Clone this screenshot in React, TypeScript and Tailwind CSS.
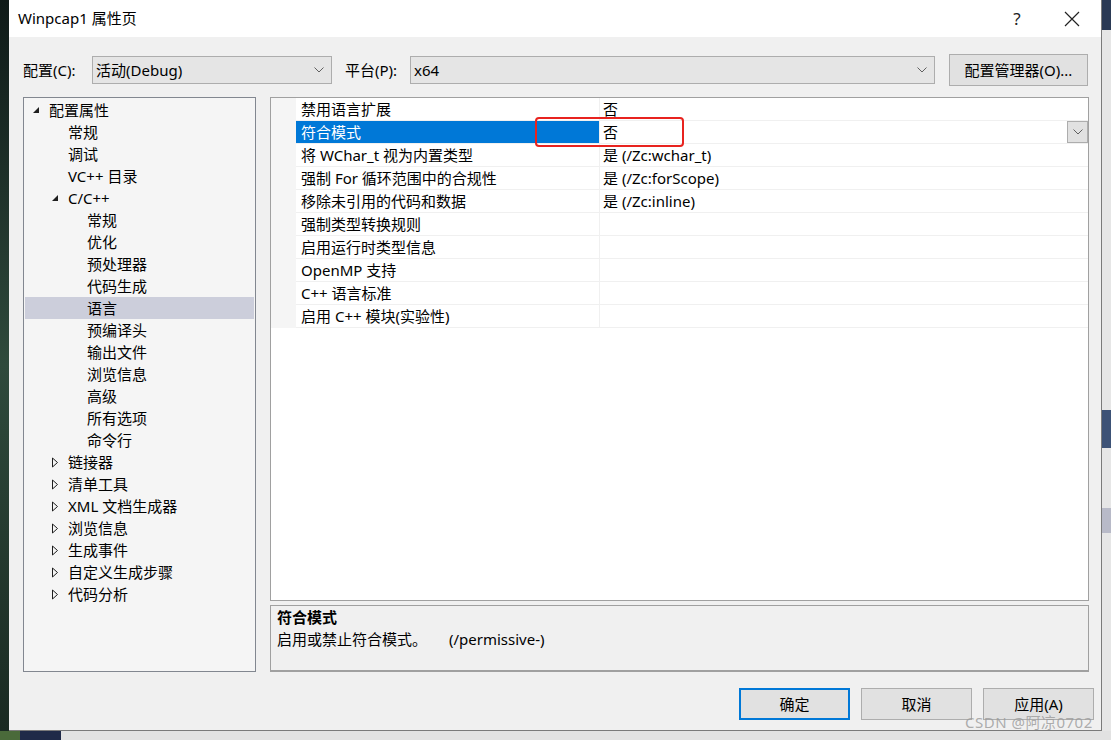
import { useState } from 'react';

interface TreeItem {
  label: string;
  level: number;
  toggle?: 'open' | 'closed';
}

interface PropRow {
  name: string;
  value: string;
}

const treeItems: TreeItem[] = [
  { label: '配置属性', level: 0, toggle: 'open' },
  { label: '常规', level: 1 },
  { label: '调试', level: 1 },
  { label: 'VC++ 目录', level: 1 },
  { label: 'C/C++', level: 1, toggle: 'open' },
  { label: '常规', level: 2 },
  { label: '优化', level: 2 },
  { label: '预处理器', level: 2 },
  { label: '代码生成', level: 2 },
  { label: '语言', level: 2 },
  { label: '预编译头', level: 2 },
  { label: '输出文件', level: 2 },
  { label: '浏览信息', level: 2 },
  { label: '高级', level: 2 },
  { label: '所有选项', level: 2 },
  { label: '命令行', level: 2 },
  { label: '链接器', level: 1, toggle: 'closed' },
  { label: '清单工具', level: 1, toggle: 'closed' },
  { label: 'XML 文档生成器', level: 1, toggle: 'closed' },
  { label: '浏览信息', level: 1, toggle: 'closed' },
  { label: '生成事件', level: 1, toggle: 'closed' },
  { label: '自定义生成步骤', level: 1, toggle: 'closed' },
  { label: '代码分析', level: 1, toggle: 'closed' },
];

const rows: PropRow[] = [
  { name: '禁用语言扩展', value: '否' },
  { name: '符合模式', value: '否' },
  { name: '将 WChar_t 视为内置类型', value: '是 (/Zc:wchar_t)' },
  { name: '强制 For 循环范围中的合规性', value: '是 (/Zc:forScope)' },
  { name: '移除未引用的代码和数据', value: '是 (/Zc:inline)' },
  { name: '强制类型转换规则', value: '' },
  { name: '启用运行时类型信息', value: '' },
  { name: 'OpenMP 支持', value: '' },
  { name: 'C++ 语言标准', value: '' },
  { name: '启用 C++ 模块(实验性)', value: '' },
];

const font = { fontFamily: '"Noto Sans", "Noto Sans CJK SC", sans-serif' };

function Chevron() {
  return (
    <svg width="10" height="6" viewBox="0 0 10 6" fill="none" stroke="#606060" strokeWidth="1">
      <path d="M0.5 0.5 L5 5 L9.5 0.5" />
    </svg>
  );
}

function Toggle({ kind }: { kind: 'open' | 'closed' }) {
  if (kind === 'open') {
    return (
      <svg width="8" height="8" viewBox="0 0 8 8">
        <path d="M7 1 L7 7 L1 7 Z" fill="#1e1e1e" />
      </svg>
    );
  }
  return (
    <svg width="8" height="11" viewBox="0 0 8 11">
      <path d="M1.5 1 L6.5 5.5 L1.5 10 Z" fill="none" stroke="#1e1e1e" strokeWidth="1" />
    </svg>
  );
}

function Select({ value, width }: { value: string; width: string }) {
  return (
    <div className={`${width} h-[28px] flex items-center justify-between bg-[#e5e5e5] border border-[#adadad] pl-[3px] pr-[7px]`}>
      <span>{value}</span>
      <Chevron />
    </div>
  );
}

export default function App() {
  const [selected] = useState(9);
  const [current] = useState(1);

  return (
    <div className="relative w-[1111px] h-[740px] overflow-hidden bg-[#e2e2e2] text-[15px] text-black" style={font}>
      <div className="flex h-[731px]">
        <div className="w-[9px] h-full bg-gradient-to-b from-[#0f1a18] via-[#2f4a3c] to-[#1a2a22]" />

        {/* dialog */}
        <div className="w-[1093px] h-full flex flex-col bg-[#f0f0f0] border-r border-b border-[#7a7a7a]">
          {/* title bar */}
          <div className="h-[37px] bg-white flex items-center justify-between shrink-0">
            <span className="pl-[9px] text-[15px]">Winpcap1 属性页</span>
            <div className="flex items-center">
              <span className="w-[46px] text-center text-[17px] text-[#222] mr-[24px]">?</span>
              <svg width="16" height="16" viewBox="0 0 16 16" className="mr-[21px]" stroke="#222" strokeWidth="1.2">
                <path d="M1 1 L15 15 M15 1 L1 15" />
              </svg>
            </div>
          </div>

          {/* config row */}
          <div className="flex items-center pl-[14px] pt-[16px] h-[50px] shrink-0">
            <span className="w-[69px]">配置(C):</span>
            <Select value="活动(Debug)" width="w-[240px]" />
            <span className="ml-[13px] w-[65px]">平台(P):</span>
            <Select value="x64" width="w-[525px]" />
            <div className="ml-[14px] w-[139px] h-[32px] flex items-center justify-center bg-[#e1e1e1] border border-[#adadad]">
              配置管理器(O)...
            </div>
          </div>

          {/* main */}
          <div className="flex pl-[14px] pt-[10px] gap-[14px]">
            {/* tree */}
            <div className="w-[233px] h-[575px] bg-[#f5f5f5] border border-[#828790] pt-[1px] px-[1px]">
              {treeItems.map((item, i) => (
                <div
                  key={i}
                  className={`h-[22px] flex items-center ${i === selected ? 'bg-[#cccedb]' : ''}`}
                >
                  <div
                    className={`flex items-center justify-end shrink-0 pr-[9px] ${
                      item.level === 0 ? 'w-[24px]' : item.level === 1 ? 'w-[43px]' : 'w-[62px]'
                    }`}
                  >
                    {item.toggle && <Toggle kind={item.toggle} />}
                  </div>
                  <span>{item.label}</span>
                </div>
              ))}
            </div>

            {/* right side */}
            <div className="w-[819px] flex flex-col gap-[4px]">
              <div className="relative h-[504px] bg-white border border-[#a0a0a0]">
                <div className="flex">
                  <div className="w-[25px] h-[230px] bg-[#f5f5f5] shrink-0" />
                  <div className="flex-1">
                    {rows.map((r, i) => (
                      <div key={i} className="h-[23px] flex border-b border-[#f0f0f0]">
                        <div
                          className={`w-[304px] shrink-0 pl-[5px] flex items-center border-r border-[#f0f0f0] ${
                            i === current ? 'bg-[#0078d7] text-white' : ''
                          }`}
                        >
                          {r.name}
                        </div>
                        <div className="flex-1 flex items-center justify-between pl-[3px]">
                          <span>{r.value}</span>
                          {i === current && (
                            <div className="w-[21px] h-[22px] bg-[#e1e1e1] border border-[#adadad] flex items-center justify-center">
                              <Chevron />
                            </div>
                          )}
                        </div>
                      </div>
                    ))}
                  </div>
                </div>
                {/* highlight box */}
                <div className="absolute left-[264px] top-[19px] w-[149px] h-[30px] border-2 border-[#e8231f] rounded-[4px]" />
              </div>

              <div className="h-[67px] bg-[#f0f0f0] border border-[#a0a0a0] border-b-2 pl-[6px]">
                <div className="font-bold leading-[22px]">符合模式</div>
                <div className="leading-[22px]">
                  启用或禁止符合模式。<span className="ml-[22px]">(/permissive-)</span>
                </div>
              </div>
            </div>
          </div>

          {/* buttons */}
          <div className="flex justify-end gap-[11px] pr-[7px] pt-[16px]">
            <div className="w-[111px] h-[32px] flex items-center justify-center bg-[#e1e1e1] border-2 border-[#0078d7]">确定</div>
            <div className="w-[111px] h-[32px] flex items-center justify-center bg-[#e1e1e1] border border-[#adadad]">取消</div>
            <div className="w-[111px] h-[32px] flex items-center justify-center bg-[#e1e1e1] border border-[#adadad]">应用(A)</div>
          </div>
        </div>

        <div className="w-[9px] h-full flex flex-col bg-[#e6e6e6]">
          <div className="h-[30px] bg-[#2b3a55]" />
          <div className="h-[380px]" />
          <div className="h-[38px] bg-[#3d5276]" />
          <div className="h-[60px]" />
          <div className="h-[25px] bg-[#b8bac8]" />
        </div>
      </div>

      {/* bottom strip */}
      <div className="flex h-[9px]">
        <div className="w-[20px] bg-[#4a6a3a]" />
        <div className="w-[41px] bg-[#1f2a48]" />
        <div className="flex-1 bg-[#e2e2e2]" />
      </div>

      {/* watermark */}
      <div className="absolute left-[965px] top-[711px] text-[15px] text-[#9a9a9a]/80 tracking-[0.5px]">
        CSDN @阿凉0702
      </div>
    </div>
  );
}
